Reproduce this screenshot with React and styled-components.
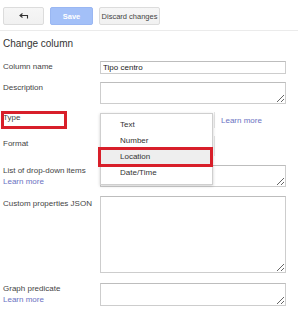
import React from "react";
import styled, { createGlobalStyle } from "styled-components";

const GlobalStyle = createGlobalStyle`
  html, body {
    margin: 0;
    padding: 0;
    background: #fff;
  }
  body {
    font-family: "Liberation Sans", Arial, sans-serif;
    color: #333;
  }
`;

const Page = styled.div`
  width: 298px;
  height: 316px;
  overflow: hidden;
  background: #fff;
`;

const Toolbar = styled.div`
  display: flex;
  align-items: center;
  gap: 6px;
  height: 30px;
  padding: 0 3px;
  border-bottom: 1px solid #ebebeb;
  box-sizing: content-box;
`;

const ToolButton = styled.button`
  display: flex;
  align-items: center;
  justify-content: center;
  width: ${({ $w }) => $w}px;
  height: 18px;
  margin-top: 2px;
  padding: 0;
  border-radius: 2px;
  border: 1px solid ${({ $primary }) => ($primary ? "#9ab7f2" : "#dcdcdc")};
  background: ${({ $primary }) =>
    $primary ? "#a3c0f8" : "linear-gradient(#f6f6f6, #f1f1f1)"};
  color: ${({ $primary }) => ($primary ? "#fff" : "#444")};
  font-family: "Liberation Sans", Arial, sans-serif;
  font-size: 7.5px;
  font-weight: ${({ $primary }) => ($primary ? "bold" : "normal")};
  box-sizing: border-box;
`;

const Title = styled.h2`
  margin: 7px 0 0;
  padding-left: 3px;
  font-size: 10px;
  line-height: 12px;
  font-weight: normal;
  color: #333;
`;

const Form = styled.div`
  display: flex;
  flex-direction: column;
  gap: 8px;
  margin-top: 11px;
  padding-left: 3px;
`;

const Row = styled.div`
  display: grid;
  grid-template-columns: 97px 186px;
  align-items: start;
  margin-top: ${({ $mt }) => $mt || 0}px;
`;

const Label = styled.div`
  position: relative;
  font-size: 8px;
  line-height: 11px;
  padding-top: ${({ $pt }) => $pt || 0}px;
  color: #444;

  ${({ $marked }) =>
    $marked &&
    `
    &::after {
      content: "";
      position: absolute;
      left: -2px;
      top: -1px;
      width: 66px;
      height: 18px;
      box-sizing: border-box;
      border: 3px solid #d81f2a;
    }
  `}
`;

const LearnMore = styled.a`
  display: block;
  color: #6a72c2;
  font-size: 8px;
  line-height: 11px;
  text-decoration: none;
`;

const TextInput = styled.input`
  display: block;
  width: 186px;
  height: 13px;
  margin: 0;
  padding: 0 2px;
  box-sizing: border-box;
  border: 1px solid #cdcdcd;
  border-top-color: #bdbdbd;
  font-family: "Liberation Sans", Arial, sans-serif;
  font-size: 8px;
  color: #222;
  outline: none;
`;

const TextArea = styled.textarea`
  display: block;
  width: 186px;
  height: ${({ $h }) => $h}px;
  margin: 0;
  padding: 2px;
  box-sizing: border-box;
  border: 1px solid #cdcdcd;
  border-top-color: #bdbdbd;
  font-family: "Liberation Sans", Arial, sans-serif;
  font-size: 8px;
  resize: both;
  outline: none;
`;

const Control = styled.div`
  position: relative;
  display: flex;
  align-items: center;
`;

const SelectBox = styled.div`
  position: relative;
  width: 115px;
  height: ${({ $h }) => $h}px;
  box-sizing: border-box;
  border-right: 1px solid #e4e4e4;
  background: #fff;

  &::after {
    content: "";
    position: absolute;
    right: 2px;
    top: 6px;
    width: 2px;
    height: 4px;
    background: #555;
  }
`;

const InlineLink = styled(LearnMore)`
  margin-left: 6px;
`;

const Menu = styled.ul`
  position: absolute;
  left: 0;
  top: 1px;
  z-index: 5;
  width: 113px;
  height: 72px;
  margin: 0;
  padding: 2.5px 0 0;
  list-style: none;
  box-sizing: border-box;
  background: #fff;
  border: 1px solid #cfcfcf;
  box-shadow: 0 1px 3px rgba(0, 0, 0, 0.2);
`;

const MenuItem = styled.li`
  position: relative;
  height: 16px;
  line-height: 16px;
  padding-left: 19px;
  font-size: 8px;
  color: #333;
  background: ${({ $active }) => ($active ? "#eeeeee" : "transparent")};

  ${({ $active }) =>
    $active &&
    `
    &::after {
      content: "";
      position: absolute;
      left: -3px;
      right: -1px;
      top: -2px;
      bottom: -2px;
      border: 3px solid #d81f2a;
    }
  `}
`;

const BackIcon = () => (
  <svg width="10" height="7" viewBox="0 0 10 7">
    <path d="M1 2.5 H8.5 V5.5" fill="none" stroke="#333" strokeWidth="1.1" />
    <path d="M3.5 0.5 L1 2.5 L3.5 4.5" fill="none" stroke="#333" strokeWidth="1.1" />
  </svg>
);

const types = ["Text", "Number", "Location", "Date/Time"];

export default function App() {
  return (
    <Page>
      <GlobalStyle />
      <Toolbar>
        <ToolButton $w={41}>
          <BackIcon />
        </ToolButton>
        <ToolButton $w={43} $primary>
          Save
        </ToolButton>
        <ToolButton $w={61}>Discard changes</ToolButton>
      </Toolbar>

      <Title>Change column</Title>

      <Form>
        <Row>
          <Label>Column name</Label>
          <TextInput defaultValue="Tipo centro" />
        </Row>

        <Row>
          <Label>Description</Label>
          <TextArea $h={22} />
        </Row>

        <Row>
          <Label $marked>Type</Label>
          <Control>
            <SelectBox $h={16} />
            <InlineLink href="#">Learn more</InlineLink>
            <Menu>
              {types.map((t) => (
                <MenuItem key={t} $active={t === "Location"}>
                  {t}
                </MenuItem>
              ))}
            </Menu>
          </Control>
        </Row>

        <Row>
          <Label $pt={2}>Format</Label>
          <Control>
            <SelectBox $h={20} />
          </Control>
        </Row>

        <Row $mt={1}>
          <Label>
            List of drop-down items
            <LearnMore href="#">Learn more</LearnMore>
          </Label>
          <TextArea $h={22} />
        </Row>

        <Row $mt={1}>
          <Label $pt={2}>Custom properties JSON</Label>
          <TextArea $h={77} />
        </Row>

        <Row $mt={2}>
          <Label>
            Graph predicate
            <LearnMore href="#">Learn more</LearnMore>
          </Label>
          <TextArea $h={23} />
        </Row>
      </Form>
    </Page>
  );
}
